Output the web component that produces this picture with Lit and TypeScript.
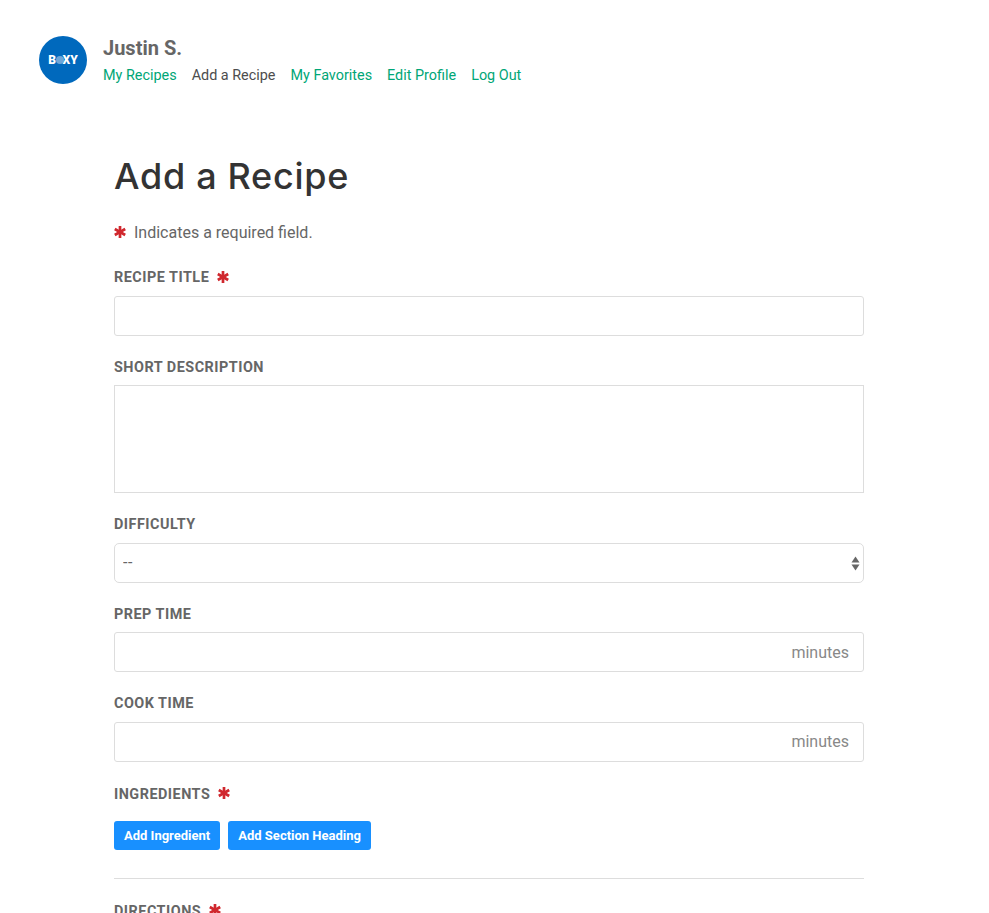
import { LitElement, html, css, svg } from 'lit';
import { customElement } from 'lit/decorators.js';

const links = [
  { label: 'My Recipes' },
  { label: 'Add a Recipe', current: true },
  { label: 'My Favorites' },
  { label: 'Edit Profile' },
  { label: 'Log Out' },
];

const star = html`<svg class="star" viewBox="0 0 12 12" aria-hidden="true">
  ${svg`<g stroke="#d0282e" stroke-width="2.7" stroke-linecap="butt">
    <line x1="6" y1="0" x2="6" y2="12"></line>
    <line x1="0.8" y1="3" x2="11.2" y2="9"></line>
    <line x1="0.8" y1="9" x2="11.2" y2="3"></line>
  </g>`}
</svg>`;

@customElement('app-root')
export class AppRoot extends LitElement {
  static styles = css`
    :host {
      display: block;
      height: 913px;
      overflow: hidden;
      background: #fff;
      font-family: Roboto, 'Liberation Sans', sans-serif;
      color: #666;
    }

    * {
      box-sizing: border-box;
    }

    header {
      display: flex;
      align-items: flex-start;
      gap: 16px;
      padding: 36px 39px 0;
    }

    .logo {
      flex: none;
      display: flex;
      align-items: center;
      justify-content: center;
      width: 48px;
      height: 48px;
      border-radius: 50%;
      background: #0069bd;
      color: #fff;
      font-size: 12px;
      font-weight: 900;
    }

    .logo i {
      width: 8px;
      height: 8px;
      margin: 0 -1px 0 -0.5px;
      border-radius: 50%;
      background: #6ea6d8;
    }

    .name {
      font-size: 20px;
      line-height: 24px;
      font-weight: 700;
      color: #666;
    }

    nav {
      display: flex;
      gap: 15px;
      margin-top: 6px;
      font-size: 14.4px;
      line-height: 20px;
    }

    nav a {
      color: #00a676;
      text-decoration: none;
    }

    nav a.current {
      color: #4d4d4d;
    }

    main {
      width: 750px;
      margin: 0 0 0 114px;
    }

    h1 {
      height: 89px;
      margin: 46px 0 0;
      font-family: Inter, sans-serif;
      font-size: 36px;
      line-height: 88px;
      font-weight: 500;
      letter-spacing: 0.7px;
      color: #333;
    }

    .note {
      display: flex;
      align-items: center;
      gap: 8px;
      margin: 0;
      font-size: 16px;
      line-height: 24px;
    }

    .star {
      flex: none;
      width: 12px;
      height: 12px;
      margin-bottom: 2px;
    }

    form {
      display: flex;
      flex-direction: column;
      gap: 21px;
      margin-top: 22px;
    }

    .label {
      display: flex;
      align-items: center;
      gap: 8px;
      height: 21px;
      margin-bottom: 7.5px;
      font-size: 14.4px;
      font-weight: 700;
      letter-spacing: 0.5px;
      text-transform: uppercase;
      color: #666;
    }

    .box {
      display: flex;
      align-items: center;
      width: 100%;
      height: 40px;
      padding: 0 14px;
      border: 1px solid #ddd;
      border-radius: 3px;
      background: #fff;
    }

    input,
    textarea {
      border: 0;
      outline: 0;
      padding: 0;
      font: inherit;
      background: transparent;
    }

    input {
      flex: 1;
      min-width: 0;
    }

    textarea {
      display: block;
      width: 100%;
      height: 108px;
      padding: 8px 14px;
      border: 1px solid #ddd;
      resize: none;
    }

    .suffix {
      font-size: 16px;
      color: #888;
    }

    .select {
      position: relative;
      border-radius: 5px;
      padding: 0;
    }

    select {
      width: 100%;
      height: 100%;
      padding: 0 8px;
      border: 0;
      outline: 0;
      appearance: none;
      background: transparent;
      font: 16px Roboto, sans-serif;
      letter-spacing: 0.5px;
      color: #666;
    }

    .select svg {
      position: absolute;
      top: 12px;
      right: 3px;
      width: 9px;
      height: 15px;
      pointer-events: none;
    }

    .ingredients {
      margin-top: 1px;
    }

    .actions {
      display: flex;
      gap: 8px;
      margin-top: 16.5px;
    }

    button {
      height: 29px;
      padding: 0 10px;
      border: 0;
      border-radius: 3px;
      background: #1890ff;
      color: #fff;
      font: 700 13px Roboto, sans-serif;
    }

    hr {
      height: 1px;
      margin: 28px 0 0;
      border: 0;
      background: #ddd;
    }

    .cut {
      margin-top: 21.5px;
    }
  `;

  render() {
    return html`
      <header>
        <div class="logo">B<i></i>XY</div>
        <div>
          <div class="name">Justin S.</div>
          <nav>
            ${links.map(
              (l) => html`<a href="#" class=${l.current ? 'current' : ''}>${l.label}</a>`
            )}
          </nav>
        </div>
      </header>
      <main>
        <h1>Add a Recipe</h1>
        <p class="note">${star}<span>Indicates a required field.</span></p>
        <form>
          <div>
            <label class="label">Recipe Title ${star}</label>
            <div class="box"><input type="text" /></div>
          </div>
          <div>
            <label class="label">Short Description</label>
            <textarea></textarea>
          </div>
          <div>
            <label class="label">Difficulty</label>
            <div class="box select">
              <select><option>--</option></select>
              <svg viewBox="0 0 9 15">
                <path d="M4.5 0.5 8.5 6.5H0.5Z" fill="#666"></path>
                <path d="M4.5 14.5 8.5 8.5H0.5Z" fill="#666"></path>
              </svg>
            </div>
          </div>
          <div>
            <label class="label">Prep Time</label>
            <div class="box"><input type="text" /><span class="suffix">minutes</span></div>
          </div>
          <div>
            <label class="label">Cook Time</label>
            <div class="box"><input type="text" /><span class="suffix">minutes</span></div>
          </div>
          <div class="ingredients">
            <label class="label">Ingredients ${star}</label>
            <div class="actions">
              <button type="button">Add Ingredient</button>
              <button type="button">Add Section Heading</button>
            </div>
            <hr />
            <div class="cut label">Directions ${star}</div>
          </div>
        </form>
      </main>
    `;
  }
}
